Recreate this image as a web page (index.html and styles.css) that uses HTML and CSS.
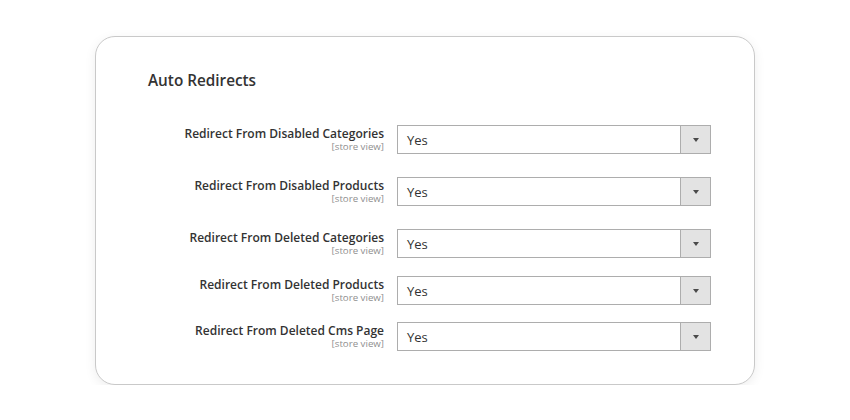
FILE: index.html
```html
<!DOCTYPE html>
<html>
<head>
<meta charset="utf-8">
<link rel="stylesheet" href="styles.css">
</head>
<body>
<div class="card">
  <h2 class="title">Auto Redirects</h2>
  <div class="rows">
    <div class="row">
      <div class="label"><span class="name">Redirect From Disabled Categories</span><span class="scope">[store view]</span></div>
      <div class="select"><span class="value">Yes</span><span class="arrow"></span></div>
    </div>
    <div class="row">
      <div class="label"><span class="name">Redirect From Disabled Products</span><span class="scope">[store view]</span></div>
      <div class="select"><span class="value">Yes</span><span class="arrow"></span></div>
    </div>
    <div class="row tight">
      <div class="label"><span class="name">Redirect From Deleted Categories</span><span class="scope">[store view]</span></div>
      <div class="select"><span class="value">Yes</span><span class="arrow"></span></div>
    </div>
    <div class="row tighter">
      <div class="label"><span class="name">Redirect From Deleted Products</span><span class="scope">[store view]</span></div>
      <div class="select"><span class="value">Yes</span><span class="arrow"></span></div>
    </div>
    <div class="row">
      <div class="label"><span class="name">Redirect From Deleted Cms Page</span><span class="scope">[store view]</span></div>
      <div class="select"><span class="value">Yes</span><span class="arrow"></span></div>
    </div>
  </div>
</div>
</body>
</html>
```
FILE: styles.css
```css
html, body {
  margin: 0;
  padding: 0;
  background: #ffffff;
}
body {
  padding: 36px 0 0 95px;
  font-family: "Open Sans", "Liberation Sans", sans-serif;
  color: #333333;
}
.card {
  width: 660px;
  height: 349px;
  box-sizing: border-box;
  border: 1px solid #c9c9c9;
  border-radius: 20px;
  background: #ffffff;
  box-shadow: 0 3px 12px rgba(0, 0, 0, 0.07);
  padding: 32px 0 0 52px;
}
.title {
  margin: 0;
  font-size: 15.3px;
  font-weight: 600;
  line-height: 22px;
  color: #333333;
}
.rows {
  margin-top: 34px;
  display: flex;
  flex-direction: column;
}
.row {
  display: flex;
  align-items: flex-start;
  gap: 13px;
  margin-bottom: 23px;
}
.row.tight {
  margin-bottom: 18px;
}
.row.tighter {
  margin-bottom: 17px;
}
.label {
  width: 236px;
  display: flex;
  flex-direction: column;
  align-items: flex-end;
  text-align: right;
  padding-top: 2px;
}
.name {
  font-size: 12px;
  font-weight: 600;
  line-height: 14px;
  color: #333333;
}
.scope {
  font-size: 9.7px;
  line-height: 12px;
  color: #8f8f8f;
}
.select {
  width: 314px;
  height: 29px;
  box-sizing: border-box;
  border: 1px solid #adadad;
  display: flex;
  align-items: center;
  background: #ffffff;
}
.value {
  flex: 1;
  padding-left: 9px;
  font-size: 13px;
  color: #333333;
}
.arrow {
  width: 30px;
  height: 100%;
  box-sizing: border-box;
  border-left: 1px solid #adadad;
  background: #e3e3e3;
  display: flex;
  align-items: center;
  justify-content: center;
}
.arrow::after {
  content: "";
  width: 0;
  height: 0;
  border-left: 3px solid transparent;
  border-right: 3px solid transparent;
  border-top: 4px solid #4a4a4a;
}
```
